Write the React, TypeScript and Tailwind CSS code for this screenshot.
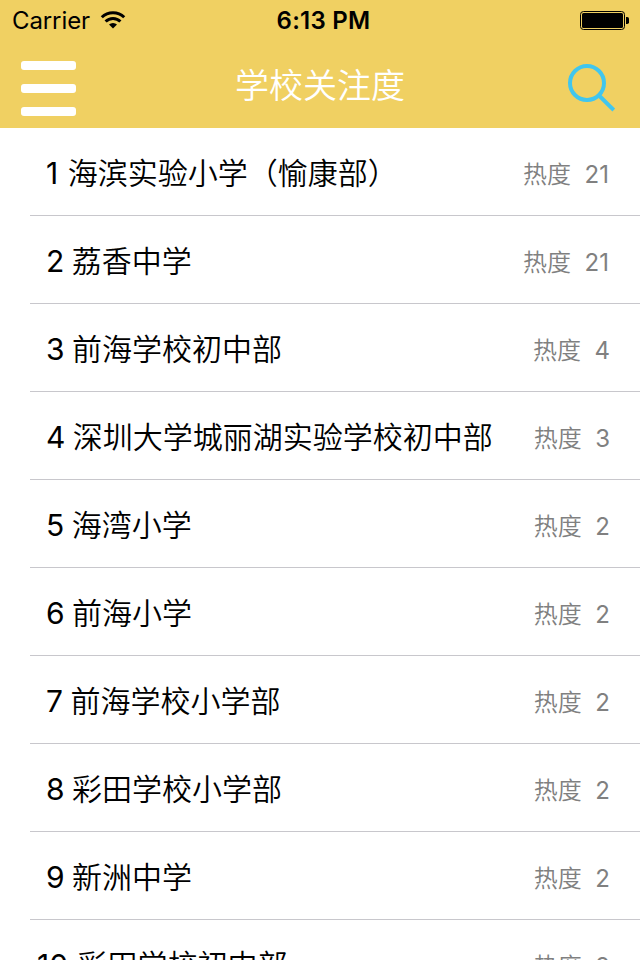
interface School {
  rank: number
  name: string
  heat: number
}

const schools: School[] = [
  { rank: 1, name: '海滨实验小学（愉康部）', heat: 21 },
  { rank: 2, name: '荔香中学', heat: 21 },
  { rank: 3, name: '前海学校初中部', heat: 4 },
  { rank: 4, name: '深圳大学城丽湖实验学校初中部', heat: 3 },
  { rank: 5, name: '海湾小学', heat: 2 },
  { rank: 6, name: '前海小学', heat: 2 },
  { rank: 7, name: '前海学校小学部', heat: 2 },
  { rank: 8, name: '彩田学校小学部', heat: 2 },
  { rank: 9, name: '新洲中学', heat: 2 },
  { rank: 10, name: '彩田学校初中部', heat: 2 },
]

function StatusBar() {
  return (
    <div className="grid h-10 grid-cols-3 items-center pl-3 pr-[11px] text-[24px] text-black">
      <div className="flex items-center gap-2.5">
        <span className="pt-0.5 leading-[38px] tracking-[-0.1px]">Carrier</span>
        <svg className="h-[18px] w-[26px]" viewBox="0 0 26 18">
          <path d="M13 17.6 9 13.5a5.8 5.8 0 0 1 8 0Z" />
          <path d="M5.6 10.5a10.4 10.4 0 0 1 14.8 0M1.8 6.2a16 16 0 0 1 22.4 0" fill="none" stroke="currentColor" strokeWidth="3" />
        </svg>
      </div>
      <span className="pl-1.5 pt-0.5 text-center font-semibold leading-[38px] tracking-[0.25px]">6:13 PM</span>
      <svg className="h-5 w-[49px] justify-self-end" viewBox="0 0 49 20">
        <rect x="0.5" y="1.5" width="44" height="18" rx="3" fill="none" stroke="currentColor" />
        <rect x="2" y="3" width="41" height="15" rx="1.5" />
        <path d="M46 7h1.2a1.8 1.8 0 0 1 1.8 1.8v3.4a1.8 1.8 0 0 1-1.8 1.8H46Z" />
      </svg>
    </div>
  )
}

function NavBar() {
  return (
    <header className="flex h-[88px] items-center justify-between pl-[21px] pr-[25px]">
      <button className="flex w-[55px] flex-col gap-[14px] pt-[9px]" aria-label="菜单">
        <span className="h-[9px] w-full rounded-[3px] bg-white" />
        <span className="h-[9px] w-full rounded-[3px] bg-white" />
        <span className="h-[9px] w-full rounded-[3px] bg-white" />
      </button>
      <h1 className="pr-[3px] pt-[3px] text-[34px] font-[350] leading-[85px] text-white">学校关注度</h1>
      <button className="pt-2" aria-label="搜索">
        <svg className="h-12 w-12" viewBox="0 0 48 48" fill="none" stroke="#41c6ee" strokeWidth="4">
          <circle cx="20" cy="19" r="17" />
          <path d="m32 31.5 14.8 14.5" />
        </svg>
      </button>
    </header>
  )
}

function SchoolRow({ school }: { school: School }) {
  return (
    <li className={`ml-[30px] flex h-[88px] items-center justify-between border-b border-[#c8c7cc] ${school.heat > 9 ? 'pr-[31px]' : 'pr-[30px]'}`}>
      <span className={`pt-0.5 text-[30px] leading-10 text-black ${school.rank > 9 ? 'pl-[7px]' : 'pl-4'}`}>
        {school.rank}{' '}
        <span className={`font-[350] ${school.rank === 1 || school.rank > 9 ? 'ml-px' : '-ml-px'}`}>{school.name}</span>
      </span>
      <span className="whitespace-pre pt-1.5 text-[24px] leading-10 text-[#808080]">
        <span className="font-[350]">热度</span>  {school.heat}
      </span>
    </li>
  )
}

export default function App() {
  return (
    <div className="h-[960px] w-[640px] overflow-hidden bg-white font-['Inter','Noto_Sans_CJK_SC',sans-serif]">
      <div className="bg-[#f0d062]">
        <StatusBar />
        <NavBar />
      </div>
      <ul>
        {schools.map((school) => (
          <SchoolRow key={school.rank} school={school} />
        ))}
      </ul>
    </div>
  )
}
